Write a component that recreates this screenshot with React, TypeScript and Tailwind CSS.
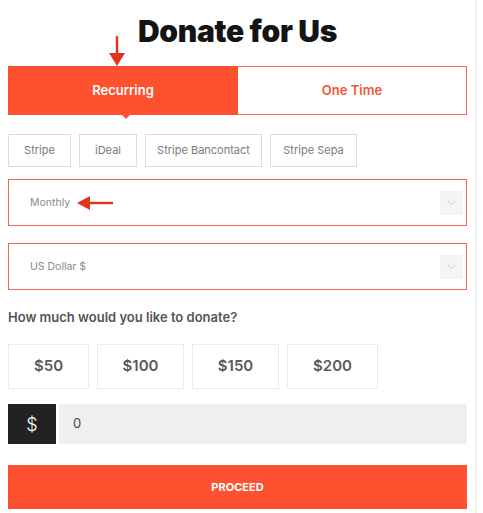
import React, { useState } from 'react';

const DownArrow = () => (
  <svg width="18" height="30" viewBox="0 0 18 30" className="block">
    <path d="M9 0 V20" stroke="#e5321d" strokeWidth="2.4" />
    <path d="M1 17 L17 17 L9 30 Z" fill="#e5321d" />
  </svg>
);

const LeftArrow = () => (
  <svg width="36" height="14" viewBox="0 0 36 14" className="block">
    <path d="M10 7 H36" stroke="#e5321d" strokeWidth="2.4" />
    <path d="M0 7 L13 0 L13 14 Z" fill="#e5321d" />
  </svg>
);

const Chevron = () => (
  <div className="w-[23px] h-[24px] bg-[#f4f4f4] flex items-center justify-center">
    <svg width="9" height="6" viewBox="0 0 9 6">
      <path d="M1 1 L4.5 4.5 L8 1" stroke="#c8c8c8" strokeWidth="1" fill="none" />
    </svg>
  </div>
);

const SelectBox: React.FC<{ label: string; arrow?: boolean }> = ({ label, arrow }) => (
  <div className="h-[47px] border-[1.5px] border-[#f0694d] flex items-center justify-between pl-[21px] pr-[3px]">
    <div className="flex items-center gap-[7px]">
      <span className="text-[10.5px] text-[#8a8a8a]">{label}</span>
      {arrow && <LeftArrow />}
    </div>
    <Chevron />
  </div>
);

export default function App() {
  const [tab, setTab] = useState<'recurring' | 'once'>('recurring');
  const gateways = [
    { name: 'Stripe', w: 'w-[63px]' },
    { name: 'iDeal', w: 'w-[58px]' },
    { name: 'Stripe Bancontact', w: 'w-[117px]' },
    { name: 'Stripe Sepa', w: 'w-[87px]' },
  ];
  const amounts = [
    { v: '$50', w: 'w-[81px]' },
    { v: '$100', w: 'w-[87px]' },
    { v: '$150', w: 'w-[87px]' },
    { v: '$200', w: 'w-[91px]' },
  ];

  return (
    <div className="w-[483px] h-[513px] bg-white overflow-hidden font-['Inter',sans-serif] flex">
      <div className="w-[477px] border-r-2 border-[#f1f1f1] pl-[8px] pt-[11px]">
        <div className="w-[459px]">
          <h1 className="text-center text-[30px] leading-[40px] font-black tracking-[-0.3px] text-[#141414]">
            Donate for Us
          </h1>
          <div className="relative h-[15px]">
            <div className="absolute left-[100px] -top-[15px]">
              <DownArrow />
            </div>
          </div>

          <div className="flex h-[49px]">
            <button
              onClick={() => setTab('recurring')}
              className="relative w-[230px] bg-[#fe5130] text-white text-[13px] font-semibold flex items-center justify-center"
            >
              Recurring
              <span className="absolute left-[114px] -bottom-[4px] w-0 h-0 border-l-[4px] border-r-[4px] border-t-[4px] border-l-transparent border-r-transparent border-t-[#fe5130]" />
            </button>
            <button
              onClick={() => setTab('once')}
              className="flex-1 border-[1.5px] border-l-0 border-[#f0694d] text-[#f0563a] text-[13px] font-semibold flex items-center justify-center"
            >
              One Time
            </button>
          </div>

          <div className="flex gap-[8px] mt-[19px]">
            {gateways.map((g) => (
              <div
                key={g.name}
                className={`${g.w} h-[33px] border-[1.5px] border-[#dcdcdc] flex items-center justify-center text-[11px] text-[#7a7a7a]`}
              >
                {g.name}
              </div>
            ))}
          </div>

          <div className="mt-[12px]">
            <SelectBox label="Monthly" arrow />
          </div>
          <div className="mt-[17px]">
            <SelectBox label="US Dollar $" />
          </div>

          <p className="mt-[19px] text-[13px] leading-[16px] font-semibold text-[#555]">
            How much would you like to donate?
          </p>

          <div className="flex gap-[8px] mt-[19px]">
            {amounts.map((a) => (
              <div
                key={a.v}
                className={`${a.w} h-[45px] border border-[#ececec] flex items-center justify-center text-[15px] font-semibold text-[#5a5a5a]`}
              >
                {a.v}
              </div>
            ))}
          </div>

          <div className="flex mt-[15px] h-[40px] gap-[3px]">
            <div className="w-[48px] bg-[#222] text-white text-[18px] font-light flex items-center justify-center">$</div>
            <div className="flex-1 bg-[#f0f0f0] flex items-center pl-[14px] text-[13px] text-[#444]">0</div>
          </div>

          <button className="mt-[21px] w-full h-[44px] bg-[#fe5130] text-white text-[11px] font-bold flex items-center justify-center">
            PROCEED
          </button>
        </div>
      </div>
    </div>
  );
}
